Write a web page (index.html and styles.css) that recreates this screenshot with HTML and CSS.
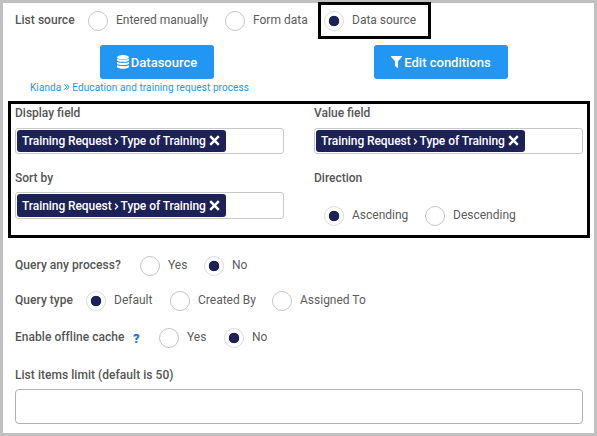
FILE: index.html
```html
<!DOCTYPE html>
<html lang="en">
<head>
<meta charset="utf-8">
<title>List source</title>
<link rel="stylesheet" href="styles.css">
</head>
<body>
<main class="panel">
  <div class="row row-source">
    <span class="label">List source</span>
    <span class="radio"></span><span class="option">Entered manually</span>
    <span class="radio"></span><span class="option">Form data</span>
    <div class="highlight"><span class="radio checked"></span><span class="option">Data source</span></div>
  </div>
  <div class="actions">
    <button class="btn btn-data"><svg width="12" height="14" viewBox="0 0 12 14"><g fill="#fff"><ellipse cx="6" cy="2.2" rx="6" ry="2.1"/><path d="M0 3.500c2 1.600 10 1.600 12 0v2C11 7.200 1 7.200 0 5.500z"/><path d="M0 6.700c2 1.600 10 1.600 12 0v2c-1 1.700-11 1.700-12 0z"/><path d="M0 9.900c2 1.600 10 1.600 12 0v2c-1 2.400-11 2.400-12 0z"/></g></svg><span>Datasource</span></button>
    <button class="btn btn-cond"><svg width="11" height="12" viewBox="0 0 11 12"><path fill="#fff" d="M.4 0h10.200q.7.500.2 1L7 5.200V11.500q-.3.600-.8.300L4 10V5.200L.2 1Q-.3.500.4 0z"/></svg><span>Edit conditions</span></button>
  </div>
  <div class="crumb"><span>Kianda</span><svg width="6" height="6" viewBox="0 0 6 6"><path d="M.4.400 2.800 3 .4 5.600M2.800.400 5.200 3 2.800 5.600" fill="none" stroke="#2196f3"/></svg><span>Education and training request process</span></div>
  <section class="fields">
    <div class="field">
      <span class="label">Display field</span>
      <div class="select"><span class="tag"><span>Training Request</span><svg class="chev" width="5" height="7" viewBox="0 0 5 7"><path d="M1 .8 3.600 3.500 1 6.200" fill="none" stroke="#fff" stroke-width="1.400"/></svg><span>Type of Training</span><svg class="cross" width="11" height="11" viewBox="0 0 11 11"><path d="M1.200 1.200l8.600 8.600M9.800 1.200l-8.600 8.600" stroke="#fff" stroke-width="2.500"/></svg></span></div>
    </div>
    <div class="field">
      <span class="label">Value field</span>
      <div class="select"><span class="tag"><span>Training Request</span><svg class="chev" width="5" height="7" viewBox="0 0 5 7"><path d="M1 .8 3.600 3.500 1 6.200" fill="none" stroke="#fff" stroke-width="1.400"/></svg><span>Type of Training</span><svg class="cross" width="11" height="11" viewBox="0 0 11 11"><path d="M1.200 1.200l8.600 8.600M9.800 1.200l-8.600 8.600" stroke="#fff" stroke-width="2.500"/></svg></span></div>
    </div>
    <div class="field">
      <span class="label">Sort by</span>
      <div class="select tall"><span class="tag"><span>Training Request</span><svg class="chev" width="5" height="7" viewBox="0 0 5 7"><path d="M1 .8 3.600 3.500 1 6.200" fill="none" stroke="#fff" stroke-width="1.400"/></svg><span>Type of Training</span><svg class="cross" width="11" height="11" viewBox="0 0 11 11"><path d="M1.200 1.200l8.600 8.600M9.800 1.200l-8.600 8.600" stroke="#fff" stroke-width="2.500"/></svg></span></div>
    </div>
    <div class="field">
      <span class="label">Direction</span>
      <div class="row row-direction">
        <span class="radio checked"></span><span class="option">Ascending</span>
        <span class="radio"></span><span class="option">Descending</span>
      </div>
    </div>
  </section>
  <div class="row row-query">
    <span class="label">Query any process?</span>
    <span class="radio"></span><span class="option">Yes</span>
    <span class="radio checked"></span><span class="option">No</span>
  </div>
  <div class="row row-type">
    <span class="label">Query type</span>
    <span class="radio checked"></span><span class="option">Default</span>
    <span class="radio"></span><span class="option">Created By</span>
    <span class="radio"></span><span class="option">Assigned To</span>
  </div>
  <div class="row row-cache">
    <span class="label">Enable offline cache</span><span class="help">?</span>
    <span class="radio"></span><span class="option">Yes</span>
    <span class="radio checked"></span><span class="option">No</span>
  </div>
  <span class="label limit-label">List items limit (default is 50)</span>
  <input class="limit" type="text" aria-label="List items limit">
</main>
</body>
</html>
```
FILE: styles.css
```css
* { box-sizing: border-box; }
body { margin: 0; font-family: Roboto, "Liberation Sans", sans-serif; font-size: 12px; color: #5c5c5c; }
svg { display: block; flex: none; }
.panel { width: 597px; height: 436px; border: 3px solid #c0c0c0; background: #fff; padding: 0 11px 0 12px; white-space: nowrap; }
.label { font-weight: 500; line-height: 16px; color: #555; }
.row { display: grid; align-items: center; height: 20px; }
.row .label { margin-top: -2px; letter-spacing: 0.04px; }
.option { line-height: 16px; padding-left: 8px; margin-top: -2px; }
.radio { width: 20px; height: 20px; border: 1px solid #c4c4c4; border-radius: 50%; }
.radio.checked { border-color: #dcdcdc; background: radial-gradient(circle, #1c2158 4.900px, #fff 5.600px); }
.row-source { grid-template-columns: 73px 20px 117px 20px 73px 113px; align-items: start; height: 37px; margin-top: -1px; }
.row-source > .radio { margin-top: 9px; }
.row-source > .option { margin-top: 10px; }
.row-source > .label { margin-top: 10px; }
.highlight { display: flex; align-items: center; height: 37px; border: 3px solid #000; padding: 1px 0 0 3px; }
.actions { display: flex; gap: 160px; margin: 6px 0 0 85px; }
.btn { display: flex; align-items: center; justify-content: center; height: 34px; border: 0; border-radius: 3px; padding: 0; background: #2196f3; color: #fff; font: 500 13px Roboto, "Liberation Sans", sans-serif; gap: 2px; }
.btn-data { width: 114px; }
.btn-cond { width: 134px; }
.crumb { display: flex; align-items: center; gap: 2.5px; height: 12px; margin: 2px 0 0 15px; font-size: 10px; letter-spacing: 0.09px; color: #2196f3; }
.fields { display: grid; grid-template-columns: 299px 269px; grid-template-rows: 65px 66px; width: 582px; height: 137px; margin: 8px 0 0 -7px; border: 3px solid #000; padding: 1px 0 0 4px; }
.field { display: flex; flex-direction: column; }
.select { width: 269px; height: 26px; margin-top: 7px; border: 1px solid #c8c8c8; border-radius: 3px; padding: 1px; }
.select.tall { height: 27px; margin-top: 6px; }
.tag { display: flex; align-items: center; width: 209px; height: 100%; border-radius: 3px; padding-left: 5px; background: #1c2158; color: #fff; font-weight: 500; letter-spacing: -0.07px; }
.chev { margin: 1px 2px 0; }
.cross { margin: -1px 0 0 3px; }
.row-direction { grid-template-columns: 20px 81px 20px auto; margin: 20px 0 0 10px; }
.row-query { grid-template-columns: 125px 20px 44px 20px auto; margin-top: 18px; }
.row-type { grid-template-columns: 71px 20px 64px 20px 82px 20px auto; margin-top: 15px; }
.row-cache { grid-template-columns: 118px 26px 20px 45px 20px auto; margin-top: 17px; }
.help { color: #1976d2; font-weight: 900; font-size: 13px; }
.limit-label { display: block; margin-top: 19px; letter-spacing: 0.04px; }
.limit { display: block; width: 568px; height: 35px; margin-top: 6px; border: 1px solid #b0b0b0; border-radius: 4px; background: #fff; }
```
